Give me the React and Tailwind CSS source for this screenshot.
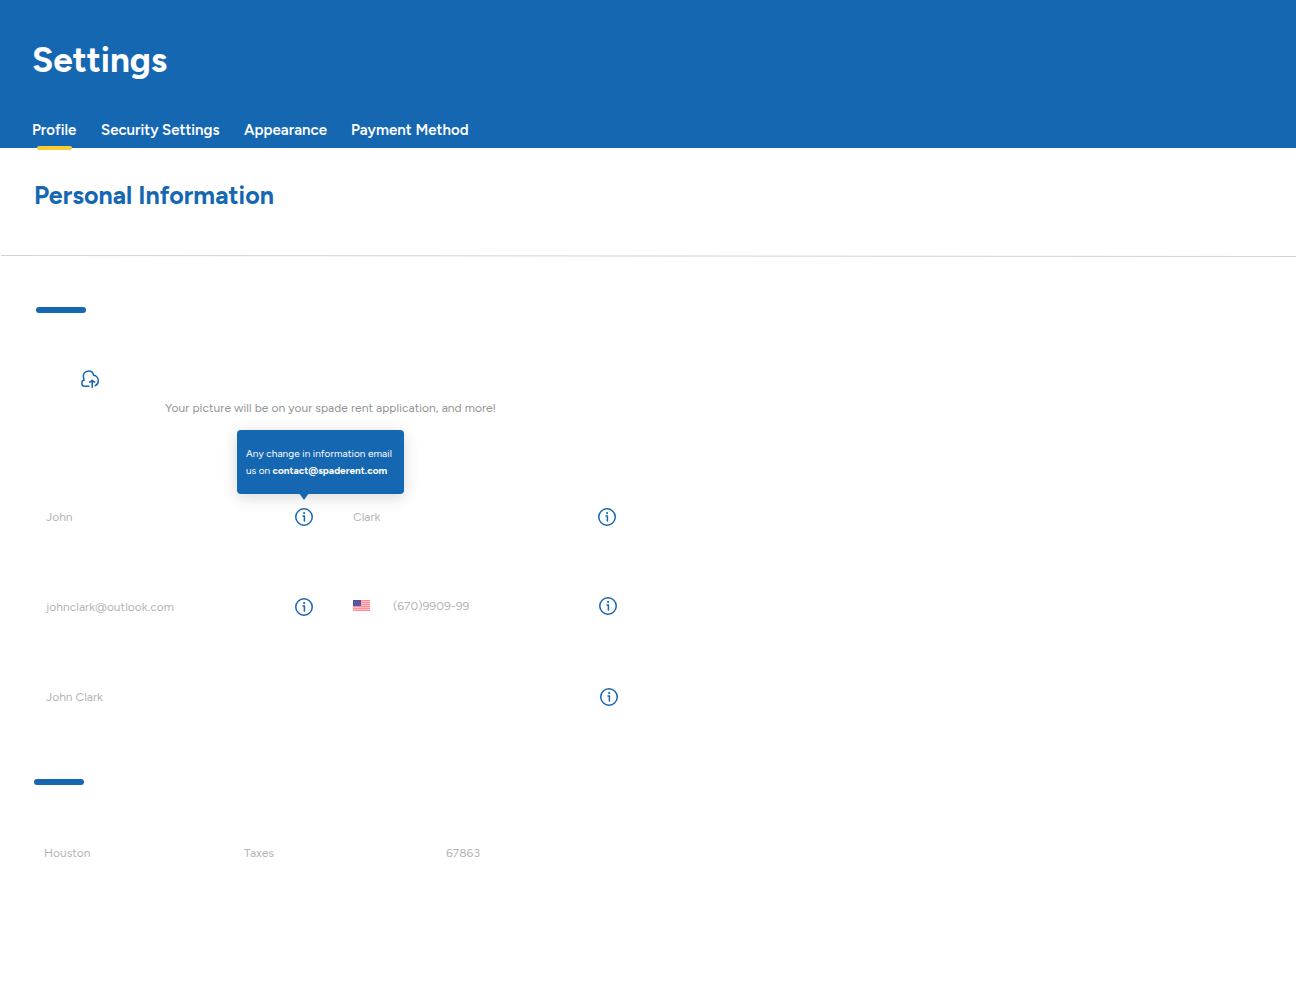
const TABS = [
  { label: 'Profile', cls: 'w-[69px]', active: true },
  { label: 'Security Settings', cls: 'w-[143px]' },
  { label: 'Appearance', cls: 'w-[107px] tracking-[0.04px]' },
  { label: 'Payment Method', cls: 'w-[140px] tracking-[0.05px]' },
];

function InfoIcon() {
  return (
    <svg className="size-5 shrink-0" viewBox="0 0 20 20" fill="none" stroke="#1667b2" strokeWidth="1.5" strokeLinecap="round" strokeLinejoin="round">
      <circle cx="10" cy="10" r="8.25" />
      <path d="M9 9h1.4v5" />
      <circle cx="10.1" cy="6.1" r="1.05" fill="#1667b2" stroke="none" />
    </svg>
  );
}

function CloudUploadIcon() {
  return (
    <svg className="size-5" viewBox="0 0 20 20" fill="none" stroke="#1667b2" strokeWidth="1.5" strokeLinecap="round" strokeLinejoin="round">
      <path d="M8.8 17.3H4.6C2.9 17.200 1.8 15.9 1.8 14.300c0-1.600 1-2.900 2.400-3.200C1.600 4.700 5.400 1.900 8.600 1.900c2.800 0 4.700 1.900 5 4.400 2.600.3 4.700 2.500 4.700 5.400 0 2.100-1.100 4.200-3.100 5" />
      <path d="M12.2 18.6v-7.300M9.600 13.200c1-.5 1.900-1.200 2.600-2 .7.8 1.600 1.500 2.600 2" />
    </svg>
  );
}

function Flag() {
  return (
    <svg className="h-[11px] w-[17px]" viewBox="0 0 17 11" shapeRendering="crispEdges">
      <rect width="17" height="11" fill="#ffc0c5" />
      {[0, 2, 4, 6, 8, 10].map((y) => (
        <rect key={y} y={y} width="17" height="1" fill="#fb8d93" />
      ))}
      <rect width="8" height="6" fill="#53509d" />
      {[1, 3, 5].map((x) => (
        <rect key={x} x={x} y="2" width="1" height="1" fill="#6e6bae" />
      ))}
      {[2, 4, 6].map((x) => (
        <rect key={x} x={x} y="4" width="1" height="1" fill="#6e6bae" />
      ))}
    </svg>
  );
}

function Tooltip() {
  return (
    <div className="absolute bottom-[33px] -left-[57px] h-16 w-[167px] rounded bg-[#1667b2] pt-[15px] pl-[9px] text-[10px] leading-[17px] whitespace-nowrap text-white shadow-[0_3px_16px_rgba(0,0,0,0.16)]">
      <p className="tracking-[0.07px]">Any change in information email</p>
      <p>
        us on <strong className="font-bold">contact@spaderent.com</strong>
      </p>
      <svg className="absolute top-[63px] left-[62px] h-[7px] w-2.5" viewBox="0 0 10 7" fill="#1667b2">
        <path d="M0 0h10L5 7z" />
      </svg>
    </div>
  );
}

export default function App() {
  return (
    <div className="flex h-[999px] w-[1296px] flex-col overflow-hidden bg-white font-['Figtree','Lato',sans-serif] text-xs text-[#b5b5b5]">
      <header className="flex h-[148px] shrink-0 flex-col bg-[#1667b2] pl-8 text-white">
        <h1 className="mt-[38px] h-11 text-[35px] leading-[44px] font-bold">Settings</h1>
        <nav className="mt-[38px] flex h-5 text-[15px] leading-5 font-semibold whitespace-nowrap">
          {TABS.map((t) => (
            <a key={t.label} className={`relative ${t.cls}`}>
              {t.label}
              {t.active && <span className="absolute top-[26px] left-[5px] h-1 w-[35px] rounded-sm bg-[#f8cc33]" />}
            </a>
          ))}
        </nav>
      </header>

      <h2 className="mt-[31px] ml-[34px] h-8 shrink-0 text-[25px] leading-8 font-bold tracking-[0.03px] text-[#1667b2]">Personal Information</h2>
      <svg className="mt-[43px] h-1 w-full shrink-0" viewBox="0 0 1296 4">
        <path d="M1 1.500L1296 2.500" stroke="#d3d3d3" strokeWidth="1" />
      </svg>

      <div className="mt-[49px] ml-9 h-1.5 w-[50px] shrink-0 rounded-full bg-[#1667b2]" />

      <section className="mt-14 flex h-[47px] shrink-0 pl-20">
        <CloudUploadIcon />
        <p className="mt-[31px] ml-[65px] h-4 leading-4 tracking-[0.05px] text-[#949494]">
          Your picture will be on your spade rent application, and more!
        </p>
      </section>

      <section className="mt-[91px] flex h-5 shrink-0 items-center pl-[46px] leading-5">
        <span className="w-[248px]">John</span>
        <div className="relative h-5 w-[59px]">
          <InfoIcon />
          <Tooltip />
        </div>
        <span className="w-[244px]">Clark</span>
        <InfoIcon />
      </section>

      <section className="mt-[70px] flex h-5 shrink-0 items-center pl-[46px] leading-5">
        <span className="w-[248px] tracking-[0.03px]">johnclark@outlook.com</span>
        <div className="w-[59px]">
          <InfoIcon />
        </div>
        <div className="-mt-0.5 flex w-[245px] items-start">
          <div className="pt-1">
            <Flag />
          </div>
          <span className="ml-[23px] tracking-[0.03px]">(670)9909-99</span>
        </div>
        <div className="-mt-0.5">
          <InfoIcon />
        </div>
      </section>

      <section className="mt-[70px] flex h-5 shrink-0 items-center pl-[46px] leading-5">
        <span className="w-[553px]">John Clark</span>
        <InfoIcon />
      </section>

      <div className="mt-[72px] ml-[34px] h-1.5 w-[50px] shrink-0 rounded-full bg-[#1667b2]" />

      <section className="mt-[58px] flex h-5 shrink-0 items-center pl-11 leading-5">
        <span className="w-[200px]">Houston</span>
        <span className="w-[202px]">Taxes</span>
        <span>67863</span>
      </section>
    </div>
  );
}
